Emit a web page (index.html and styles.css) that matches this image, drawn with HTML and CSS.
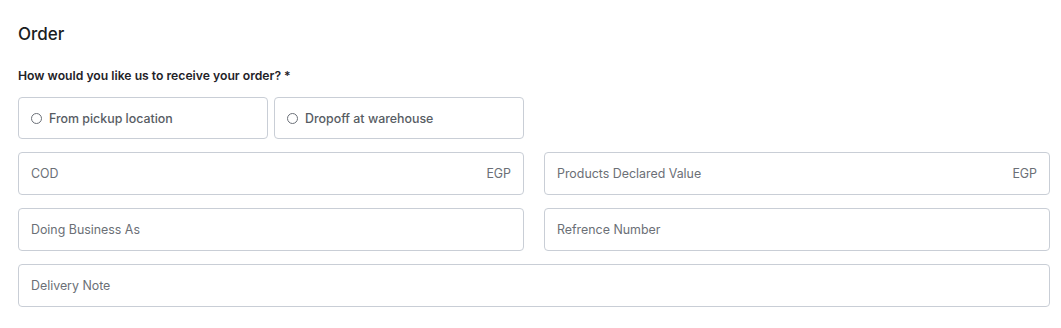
FILE: index.html
```html
<!DOCTYPE html>
<html lang="en">
<head>
    <meta charset="UTF-8">
    <meta name="viewport" content="width=device-width, initial-scale=1.0">
    <link rel="stylesheet" href="styles.css">
    <title>Order</title>
</head>
<body>
    <section class="order">
        <h2 class="order-title">Order</h2>
        <p class="question">How would you like us to receive your order? *</p>
        <div class="fields">
            <div class="choices">
                <label class="choice">
                    <span class="dot"></span>
                    From pickup location
                </label>
                <label class="choice">
                    <span class="dot"></span>
                    Dropoff at warehouse
                </label>
            </div>
            <div></div>
            <div class="field">
                <span class="hint">COD</span>
                <span class="unit">EGP</span>
            </div>
            <div class="field">
                <span class="hint">Products Declared Value</span>
                <span class="unit">EGP</span>
            </div>
            <div class="field">
                <span class="hint">Doing Business As</span>
            </div>
            <div class="field">
                <span class="hint">Refrence Number</span>
            </div>
            <div class="field wide">
                <span class="hint">Delivery Note</span>
            </div>
        </div>
    </section>
</body>
</html>
```

FILE: styles.css
```css
body{
    margin: 0;
    font-family: Inter, "Noto Sans", sans-serif;
    background: #fff;
}
.order{
    width: 1032px;
    padding: 22px 0 0 18px;
}
.order-title{
    margin: 0;
    font-size: 17px;
    line-height: 24px;
    font-weight: 500;
    color: #1a1d21;
}
.question{
    margin: 22px 0 0;
    font-size: 12.2px;
    line-height: 16px;
    font-weight: 600;
    color: #1f2328;
}
.fields{
    margin-top: 13px;
    display: grid;
    grid-template-columns: 1fr 1fr;
    column-gap: 20px;
    row-gap: 13px;
}
.choices{
    display: grid;
    grid-template-columns: 1fr 1fr;
    gap: 6px;
}
.choice{
    height: 42px;
    box-sizing: border-box;
    border: 1px solid #c9ced6;
    border-radius: 4px;
    display: flex;
    align-items: center;
    padding-left: 12px;
    font-size: 12.4px;
    font-weight: 500;
    color: #575c63;
}
.dot{
    width: 9px;
    height: 9px;
    border: 1px solid #6b7078;
    border-radius: 50%;
    margin-right: 7px;
}
.field{
    height: 43px;
    box-sizing: border-box;
    border: 1px solid #c9ced6;
    border-radius: 4px;
    display: flex;
    align-items: center;
    justify-content: space-between;
    padding: 0 12px;
    font-size: 12.4px;
    color: #6b6f76;
}
.wide{
    grid-column: 1 / 3;
}
```
